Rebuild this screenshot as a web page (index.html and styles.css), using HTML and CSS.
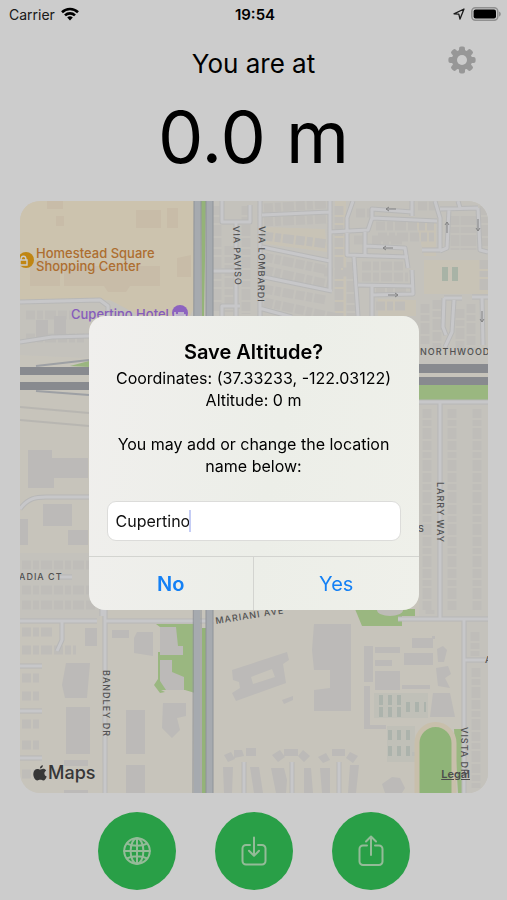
FILE: index.html
```
<!DOCTYPE html>
<html lang="en">

<head>
    <meta charset="UTF-8">
    <meta name="viewport" content="width=device-width, initial-scale=1.0">
    <title>Altitude</title>
    <link rel="stylesheet" href="styles.css">
</head>

<body>
    <!-- Status bar -->
    <div class="status-bar">
        <div class="status-left">
            <span>Carrier</span>
            <svg width="18" height="14" viewBox="0 0 18 14" fill="none" stroke="#000" stroke-width="2.6">
                <path d="M1 5.2a11.5 11.5 0 0 1 16 0"/>
                <path d="M4 8.4a7.2 7.2 0 0 1 10 0"/>
                <path d="M9 13.4L6.2 10.6a4 4 0 0 1 5.6 0z" fill="#000" stroke="none"/>
            </svg>
        </div>
        <div class="status-time">19:54</div>
        <div class="status-right">
            <svg width="12" height="12" viewBox="0 0 12 12" fill="none" stroke="#222" stroke-width="1.3" stroke-linejoin="round">
                <path d="M11 1L1 5.8l4.8.4L7 11z"/>
            </svg>
            <svg width="30" height="14" viewBox="0 0 30 14">
                <rect x="0.8" y="0.8" width="26" height="12.4" rx="3.6" fill="none" stroke="#b4b4b4" stroke-width="1.5"/>
                <rect x="2.6" y="2.4" width="22.4" height="9.2" rx="2" fill="#000"/>
                <path d="M28 4.4c2.4 1 2.4 4.2 0 5.2z" fill="#b4b4b4"/>
            </svg>
        </div>
    </div>

    <!-- Current altitude -->
    <header class="header">
        <h1>You are at</h1>
        <p class="altitude">0.0 m</p>
        <button class="settings" aria-label="Settings">
            <svg width="28" height="28" viewBox="-14 -14 28 28">
                <g fill="#bdbdbd">
                    <g id="teeth">
                        <rect x="-3" y="-13.6" width="6" height="27.2" rx="2"/>
                        <rect x="-13.6" y="-3" width="27.2" height="6" rx="2"/>
                    </g>
                    <use href="#teeth" transform="rotate(45)"/>
                </g>
                <circle r="7.6" fill="none" stroke="#bdbdbd" stroke-width="5.2"/>
                <circle r="5" fill="#fff"/>
            </svg>
        </button>
    </header>

    <!-- Map -->
    <main class="map">
        <svg class="map-canvas" viewBox="20 201 468 592" preserveAspectRatio="xMidYMid slice">
            <rect x="20" y="201" width="468" height="592" fill="#f9f5ea"/>

            <!-- Residential areas -->
            <path class="land" d="M213 201H488V364H213zM20 303L192 300V316H89V358L20 355zM419 404H488V793H466V620H419zM20 553H100V620H20z"/>
            <path fill="#fbf4e4" d="M266 227L325 229L327 252L266 244zM335 201H346V316H335zM424 260H488V294H424zM416 222H436V256H424zM378 299L416 300V316H378z"/>

            <!-- Shopping center -->
            <path fill="#fff4da" d="M20 201H194V308L190 316H140L110 300L20 301z"/>
            <path fill="#fbecd2" d="M136 210h25v18h-25zM167 208h11v20h-11zM47 201h16v8h-16zM30 260h30v26h-30zM64 266h96v20h-30l-4 6h-18l-4-6h-40zM177 258l14-3v22h-14zM56 216h8v10h-8z"/>

            <!-- Houses -->
            <g class="houses">
                <path d="M264 208L328 204M264 222L328 219M264 236L328 244M264 257L328 270M264 270L328 284M264 289L326 300M264 302L338 318"/>
                <path d="M217 206V312M229 246V312M246 206V314M339 206V316M351 262V316"/>
                <path d="M356 213H370M376 226H434M378 237H434M354 240H364M372 240H404M324 272H352M362 266H405M362 277H408M376 291H408M376 306H405"/>
                <path d="M418 206H436M455 216V250M465 216V250M472 216V250M484 206V246M460 309V352M471 304V350M437 300V350M425 304V344M484 260V292"/>
                <path d="M26 315H84M26 338H84"/>
                <path d="M427 409V612M452 409V612M477 409V612"/>
                <path d="M22 565H96M22 590H96M22 605H96M22 632H52M22 650H76M22 678H40M22 696H40M22 724H40M22 745H40M22 774H56"/>
                <path d="M475 632V656M476 668V788M430 610V614"/>
            </g>

            <!-- Buildings -->
            <g class="building">
                <path d="M28 450H52V458H88V478H54V488H28zM43 504H72V526H43zM68 530H88V545H68zM20 519H28V545H20z"/>
                <path d="M36 320h12v20h-12zM54 316h12v22h-12z"/>
                <path d="M66 663H90L87 698H65L62 685zM66 707H90V754H66zM64 760H88V766H64zM64 790H88V793H64zM85 628H97V646H85zM112 630H129V638H112zM137 632H153V656L134 653V638zM126 710H145V754H126zM126 765H145V793H126z"/>
                <path d="M163 703H186V716L177 718L180 730L172 738L162 728z"/>
                <path fill-rule="evenodd" d="M232 670L287 652L289 660L283 664L286 683L236 701L232 693L240 688L239 682L233 680zM251 677L253 684L275 677L272 669z"/>
                <path d="M282 700l11-4v4l-9 4zM314 624H351V711H314V690L330 688V670H314L312 650z"/>
                <path d="M364 646H373V682H364zM375 647H400V653H375zM375 660H392V666H375zM412 638H433V648H412zM404 653H433V665H404zM437 649l6-3 4 4-3 12h-6zM436 668l12-2 3 8-6 4 5 10-12-2zM375 671H400V690H375zM364 686H370V725H386V729H364zM402 685H430V689H402zM433 693H450L455 717H430z"/>
                <path d="M224 755l7-3 4 7-7 3zM234 750h8l2 6-10 2zM246 748h10v8h-10zM223 767h10l-1 26h-8zM250 767h9l4 26h-9zM272 755l8-5 5 7-7 5zM284 749h14v7h-14zM303 750l7 6-6 6-6-6zM271 768h13l3 12-1 13h-10zM304 768h7l2 25h-9zM318 757l8-4 4 7-7 3zM332 749h13v7h-13zM350 752l8 4-5 7-7-5zM320 768h10v25h-8zM350 765h9l-3 28h-8zM382 784l10-7 8 1 5 10-3 5h-17z"/>
                <path d="M432 636h3v3h-3zM412 752h22v4h-22"/>
            </g>
            <g fill="#e8ede4">
                <path d="M374 693H428V718H374zM387 726H415V762H387z" opacity=".5"/>
                <path d="M442 267h6v14h-6zM452 267h6v14h-6z" fill="#d3e0d0"/>
                <path stroke="#d8e0d8" stroke-width="10" stroke-dasharray="4 5" fill="none" d="M379 700H404M379 712H404M406 707H426M388 735H412M388 751H412"/>
            </g>

            <!-- Parks -->
            <g class="park">
                <path d="M156 624H195V693L185 690H161L165 692L160 693L154 685L158 679V652H160V627z"/>
                <path d="M355 609H415V616H402V626H362z"/>
                <path d="M419 385H488V400H419zM454 729H463V793H458z"/>
            </g>
            <path class="building" d="M160 627H176L178 646H183V655H160zM160 660H172V672L184 677V690H166L160 681z"/>
            <ellipse cx="390" cy="610" rx="13" ry="6" fill="#eeebe5"/>
            <path d="M417 796V743a18.500 18.500 0 0 1 37 0V796z" fill="#b3e297" stroke="#fbefd6" stroke-width="5"/>

            <!-- Streets -->
            <g id="streets">
                <g class="street-edge">
                    <path id="roads" d="M260 201V316M262 215L330 212M330 201V291M262 247L330 261M264 277L332 291M259 308L292 317M330 232L368 230L372 218L437 221M412 216V201M412 212L372 209V220M353 201L347 218V255L408 257M365 232V255M365 246L405 248L408 268M354 257L358 316M358 285L412 286M372 286V316M412 270L413 294L372 295M435 201L440 218V250H422M440 209L478 208M449 209L447 248L440 251M478 208L480 250L488 252M444 298H462M445 347L452 332L454 300M444 298L443 327L446 335M472 297H488M482 297L483 345M458 201L460 208M222 201V222H236V316M222 222H250V205M212 271H240M222 316V306H240
                    M20 302L100 300L108 306V316M20 342L52 337L89 336
                    M20 509C28 498 36 497 46 497H89M60 577H72M20 621H97M106 621H214M105 609V793M102 609V616M62 622V640L57 651M20 666H42M20 711H42M20 758H42M244 762V793M292 762V793M339 762V793
                    M419 402H488M440 402V618M398 619H488M464 619V793M464 660H488"/>
                </g>
                <use href="#roads" class="street"/>
            </g>

            <!-- Expressway -->
            <path fill="#d0d5db" d="M194 201H201L200 316V793H194zM206 201H213V793H206z"/>
            <path fill="#b9e097" d="M201 201H206L204 320L202 316zM202 628H206V793H202z"/>
            <path fill="none" stroke="#b3b8bf" stroke-width="1" d="M194 201L193 793M201 201L201 793M206 201V793M213 201V793"/>
            <path fill="#c1e49f" d="M70 366L89 361V367z"/>
            <path fill="#abadb3" d="M20 367H89V375H20zM20 382H89V390H20zM419 364H488V373H419zM419 377H488V385H419z"/>
            <path fill="none" stroke="#c5c8ce" stroke-width="2" d="M36 366L89 360M36 391L89 395"/>
            <path fill="none" stroke="#e6e4de" stroke-width="2" d="M20 407L89 413M20 420L89 426"/>

            <!-- One-way arrows -->
            <g fill="none" stroke="#a4a4a4" stroke-width="1">
                <path d="M396 209H386M389 207L386 209L389 211M393 248H383M386 246L383 248L386 250M388 295H398M395 293L398 295L395 297M447 233V222M445 225L447 222L449 225M478 219V231M476 228L478 231L480 228M482 311V322M480 319L482 322L484 319"/>
            </g>

            <!-- Street names -->
            <g class="street-name">
                <text transform="translate(233 226) rotate(88)">VIA PAVISO</text>
                <text transform="translate(259 226) rotate(91)">VIA LOMBARDI</text>
                <text transform="translate(437 482) rotate(90)">LARRY WAY</text>
                <text transform="translate(103 670) rotate(90)">BANDLEY DR</text>
                <text transform="translate(461 727) rotate(90)">VISTA DR</text>
                <text x="420" y="355">NORTHWOOD</text>
                <text x="19" y="580">ADIA CT</text>
                <text x="418" y="532">S</text>
                <text transform="translate(216 624) rotate(-9)">MARIANI AVE</text>
                <text x="485" y="663">A</text>
            </g>

            <!-- Places -->
            <circle cx="26" cy="260" r="8" fill="#f0a818"/>
            <path d="M20 260h7v5h-7zM21 260c0-5 5-5 5 0" fill="#f0a818" stroke="#fff" stroke-width="1.400"/>
            <g class="place shopping">
                <text x="36" y="258">Homestead Square</text>
                <text x="36" y="271">Shopping Center</text>
            </g>
            <text class="place hotel" x="71" y="319">Cupertino Hotel</text>
            <circle cx="180" cy="313" r="8" fill="#b17cf0"/>
            <path d="M175 312v5M175 315h10v2M178 313h6" stroke="#fff" stroke-width="1.500" fill="none"/>
        </svg>
        <div class="map-brand">
            <svg width="14" height="16" viewBox="0 0 14 16" fill="#454545">
                <path d="M9.900 0.300c.1 1.700-1.300 3.300-3 3.300C6.700 2 8.200.4 9.900.3z"/>
                <path d="M7 4.600c.8 0 1.700-.8 3.200-.8 1.200 0 2.300.6 3 1.600-2.700 1.600-2.200 5 .5 6.100-.7 1.900-1.900 4-3.400 4-1.200 0-1.600-.7-3-.7-1.500 0-1.900.7-3 .7C2.300 15.500.3 12 .3 9c0-3.200 2-5.100 4.100-5.100 1.200 0 2 .7 2.600.7z"/>
            </svg>
            <span>Maps</span>
        </div>
        <a class="legal" href="#">Legal</a>
    </main>

    <!-- Actions -->
    <nav class="actions">
        <button class="round-btn" aria-label="Open map">
            <svg width="28" height="28" viewBox="0 0 28 28">
                <circle cx="14" cy="14" r="12.800"/>
                <ellipse cx="14" cy="14" rx="6.400" ry="12.800"/>
                <path d="M14 1.200V26.800M1.200 14H26.800M4 6.600C9.500 9.400 18.500 9.400 24 6.600M4 21.400C9.500 18.600 18.500 18.600 24 21.400"/>
            </svg>
        </button>
        <button class="round-btn" aria-label="Save">
            <svg width="28" height="32" viewBox="0 0 28 32">
                <path d="M10 10H6a3.500 3.500 0 0 0-3.500 3.500V26A3.500 3.500 0 0 0 6 29.500H22A3.500 3.500 0 0 0 25.500 26V13.500A3.500 3.500 0 0 0 22 10H18M14 2.500V20.500M9 15.800L14 20.800L19 15.800"/>
            </svg>
        </button>
        <button class="round-btn" aria-label="Share">
            <svg width="28" height="32" viewBox="0 0 28 32">
                <path d="M10 10.500H6A3.500 3.500 0 0 0 2.500 14V26.500A3.500 3.500 0 0 0 6 30H22A3.500 3.500 0 0 0 25.500 26.500V14A3.500 3.500 0 0 0 22 10.500H18M14 20V1.800M9 6.500L14 1.500L19 6.500"/>
            </svg>
        </button>
    </nav>

    <!-- Save dialog -->
    <div class="overlay">
        <form class="dialog" role="dialog" aria-labelledby="dialog-title">
            <div class="dialog-body">
                <h2 id="dialog-title">Save Altitude?</h2>
                <p>Coordinates: (37.33233, -122.03122)<br>Altitude: 0 m</p>
                <label for="location-name">You may add or change the location name below:</label>
                <div class="field">
                    <input type="text" id="location-name" value="Cupertino">
                    <span class="caret"></span>
                </div>
            </div>
            <div class="dialog-buttons">
                <button type="button" class="btn btn-bold">No</button>
                <button type="button" class="btn">Yes</button>
            </div>
        </form>
    </div>
</body>

</html>
```
FILE: styles.css
```
* {
    box-sizing: border-box;
}

body {
    display: flex;
    flex-direction: column;
    min-height: 100vh;
    margin: 0;
    background: white;
    color: black;
    font-family: Inter, "Liberation Sans", sans-serif;
}

button {
    border: none;
    padding: 0;
    background: none;
    font-family: inherit;
    cursor: pointer;
}

svg {
    display: block;
}

/* Status bar */
.status-bar {
    display: grid;
    grid-template-columns: 1fr auto 1fr;
    align-items: center;
    height: 28px;
    padding: 0 6px 0 9px;
    font-size: 14px;
}

.status-left,
.status-right {
    display: flex;
    align-items: center;
    gap: 6px;
    color: #222;
}

.status-right {
    justify-content: flex-end;
}

.status-time {
    font-size: 15px;
    font-weight: 600;
}

/* Header */
.header {
    position: relative;
    padding-top: 16px;
    text-align: center;
}

h1 {
    margin: 0;
    font-size: 26px;
    font-weight: 400;
    line-height: 40px;
}

.altitude {
    margin: 0;
    font-size: 72px;
    line-height: 106px;
}

.settings {
    position: absolute;
    top: 18px;
    right: 31px;
}

/* Map */
.map {
    position: relative;
    flex: 1;
    margin: 11px 19px 0 20px;
    border-radius: 20px;
    overflow: hidden;
}

.map-canvas {
    position: absolute;
    width: 100%;
    height: 100%;
}

.land {
    fill: #f5f3ec;
}

.houses {
    fill: none;
    stroke: #efede8;
    stroke-width: 9;
    stroke-dasharray: 9 2 6 2 11 2;
}

.building {
    fill: #ebe9e6;
}

.park {
    fill: #c1e5a0;
}

.street-edge {
    fill: none;
    stroke: #e6e6e5;
    stroke-width: 5;
}

.street {
    fill: none;
    stroke: #f9f9fc;
    stroke-width: 3;
}

.street-edge,
.street {
    stroke-linejoin: round;
}

.street-name {
    fill: #666;
    font-size: 9px;
    font-weight: 500;
    letter-spacing: 1px;
}

.place {
    font-size: 13px;
    font-weight: 500;
}

.shopping {
    fill: #d98a3c;
}

.hotel {
    fill: #a873ea;
}

.map-brand {
    position: absolute;
    left: 13px;
    bottom: 8px;
    display: flex;
    align-items: center;
    gap: 1px;
    color: #454545;
    font-size: 18px;
    font-weight: 500;
    line-height: 24px;
}

.legal {
    position: absolute;
    right: 18px;
    bottom: 12px;
    color: #606060;
    font-size: 11px;
    font-weight: 600;
}

/* Actions */
.actions {
    display: flex;
    justify-content: center;
    gap: 39px;
    padding: 19px 0 10px;
}

.round-btn {
    display: flex;
    justify-content: center;
    align-items: center;
    width: 78px;
    height: 78px;
    border-radius: 50%;
    background: #34c759;
}

.round-btn svg {
    fill: none;
    stroke: #b9eabf;
    stroke-width: 2;
    stroke-linecap: round;
    stroke-linejoin: round;
}

/* Dialog */
.overlay {
    position: fixed;
    inset: 0;
    display: flex;
    justify-content: center;
    align-items: center;
    padding-top: 26px;
    background: rgba(0, 0, 0, 0.2);
}

.dialog {
    width: 330px;
    border-radius: 16px;
    background: linear-gradient(100deg, #f0efed, #eceee8 55%, #eff0ea);
    overflow: hidden;
    text-align: center;
}

.dialog-body {
    padding: 23px 18px 15px;
    font-size: 16px;
    line-height: 22px;
}

h2 {
    margin: 0 0 1px;
    font-size: 20px;
    font-weight: 600;
    line-height: 27px;
}

.dialog-body p {
    margin: 0 0 22px;
}

.dialog-body label {
    display: block;
}

.field {
    position: relative;
    margin-top: 24px;
}

.field input {
    display: block;
    width: 100%;
    height: 40px;
    padding: 0 8px;
    border: 1px solid #dcdcda;
    border-radius: 9px;
    background: white;
    color: #111;
    font-family: inherit;
    font-size: 16px;
    outline: none;
}

.caret {
    position: absolute;
    top: 9px;
    left: 82px;
    width: 2px;
    height: 22px;
    background: #c5cdf5;
}

.dialog-buttons {
    display: flex;
    border-top: 1px solid #d3d4d0;
}

.btn {
    flex: 1;
    height: 53px;
    color: #1480f5;
    font-size: 20px;
}

.btn + .btn {
    border-left: 1px solid #d3d4d0;
}

.btn-bold {
    font-weight: 600;
}
```
